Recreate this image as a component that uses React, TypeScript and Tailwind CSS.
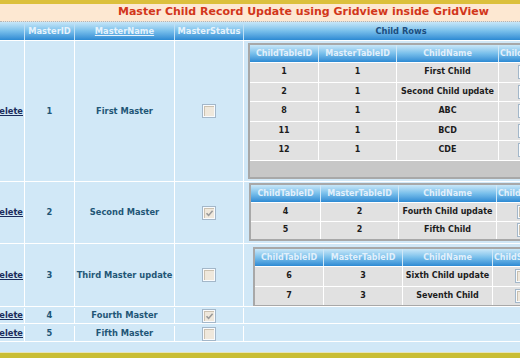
import React from "react";

type Child = { id: number; mid: number; name: string };

const font = "font-['DejaVu_Sans','Liberation_Sans',sans-serif]";
const hdr = "bg-gradient-to-b from-[#c8e7f8] via-[#78bfeb] to-[#2c8ad3]";

const CheckMark = () => (
  <svg width="9" height="9" viewBox="0 0 9 9">
    <path d="M1.5 4.2 L3.6 6.4 L7.6 1.8" fill="none" stroke="#9a9a9a" strokeWidth="1.6" />
  </svg>
);

const CheckBox = ({ checked }: { checked?: boolean }) => (
  <div className="w-[14px] h-[14px] border border-[#a3b7c9] bg-[#f9fbfd] p-[1px] shrink-0">
    <div className="w-full h-full bg-[#efe8dc] border-t border-l border-[#cbc1b0] flex items-center justify-center">
      {checked && <CheckMark />}
    </div>
  </div>
);

type TableProps = {
  rows: Child[];
  box: string;
  widths: [string, string, string];
  rowH: string;
  boxPad: string;
  footer?: boolean;
};

function ChildTable({ rows, box, widths, rowH, boxPad, footer }: TableProps) {
  return (
    <div className={`${box} border-2 border-[#a8a8a8] bg-[#e1e1e1] w-[320px] text-[8px] font-bold`}>
      <div className={`flex h-[17px] ${hdr} text-[#e2f0fb]`}>
        <div className={`${widths[0]} border-r border-[#cfe8f8] flex items-center justify-center`}>ChildTableID</div>
        <div className={`${widths[1]} border-r border-[#cfe8f8] flex items-center justify-center`}>MasterTableID</div>
        <div className={`${widths[2]} border-r border-[#cfe8f8] flex items-center justify-center`}>ChildName</div>
        <div className="w-[60px] flex items-center pl-[1px] whitespace-nowrap">ChildStatus</div>
      </div>
      {rows.map((r) => (
        <div key={r.id} className={`flex ${rowH} border-t border-white text-[#1c1c1c]`}>
          <div className={`${widths[0]} border-r border-white flex items-center justify-center`}>{r.id}</div>
          <div className={`${widths[1]} border-r border-white flex items-center justify-center`}>{r.mid}</div>
          <div className={`${widths[2]} border-r border-white flex items-center justify-center whitespace-nowrap`}>{r.name}</div>
          <div className={`w-[60px] flex items-center ${boxPad}`}>
            <CheckBox />
          </div>
        </div>
      ))}
      {footer && <div className="h-[17px] bg-[#c7c7c7] border-t border-white" />}
    </div>
  );
}

type MasterRow = {
  id: number;
  name: string;
  checked?: boolean;
  h: string;
  child?: React.ReactNode;
};

export default function App() {
  const masters: MasterRow[] = [
    {
      id: 1,
      name: "First Master",
      h: "h-[141px]",
      child: (
        <ChildTable
          box="ml-[4px] mt-[2px]"
          widths={["w-[69px]", "w-[78px]", "w-[102px]"]}
          rowH="h-[19.5px]"
          boxPad="pl-[19px]"
          footer
          rows={[
            { id: 1, mid: 1, name: "First Child" },
            { id: 2, mid: 1, name: "Second Child update" },
            { id: 8, mid: 1, name: "ABC" },
            { id: 11, mid: 1, name: "BCD" },
            { id: 12, mid: 1, name: "CDE" },
          ]}
        />
      ),
    },
    {
      id: 2,
      name: "Second Master",
      checked: true,
      h: "h-[62px]",
      child: (
        <ChildTable
          box="ml-[5px] mt-[1px]"
          widths={["w-[70px]", "w-[78px]", "w-[98px]"]}
          rowH="h-[18.5px]"
          boxPad="pl-[20px]"
          rows={[
            { id: 4, mid: 2, name: "Fourth Child update" },
            { id: 5, mid: 2, name: "Fifth Child" },
          ]}
        />
      ),
    },
    {
      id: 3,
      name: "Third Master update",
      h: "h-[63px]",
      child: (
        <ChildTable
          box="ml-[9px] mt-[3px]"
          widths={["w-[69px]", "w-[79px]", "w-[90px]"]}
          rowH="h-[19.5px]"
          boxPad="pl-[22px]"
          rows={[
            { id: 6, mid: 3, name: "Sixth Child update" },
            { id: 7, mid: 3, name: "Seventh Child" },
          ]}
        />
      ),
    },
    { id: 4, name: "Fourth Master", checked: true, h: "h-[17px] pt-[1px]" },
    { id: 5, name: "Fifth Master", h: "h-[18px] pt-[2px]" },
  ];

  return (
    <div className={`w-[520px] h-[358px] overflow-hidden bg-[#d1e8f7] ${font}`}>
      <div className="w-[558px]">
        {/* top bar + title */}
        <div className="h-[4px] bg-[#dcc03c]" />
        <div className="h-[17px] bg-[#fde8d2] flex items-center pl-[118px]">
          <span className="text-[11px] font-bold text-[#d2361a] whitespace-nowrap">
            Master Child Record Update using Gridview inside GridView
          </span>
        </div>
        <div className="h-[1px] border-t border-dotted border-[#b4b4b4] bg-[#e8e0d8]" />

        {/* header */}
        <div className={`flex h-[19px] ${hdr} border-b border-white text-[8.3px] font-bold text-[#e6f3fc]`}>
          <div className="w-[25px] border-r border-[#bfe0f5]" />
          <div className="w-[50px] border-r border-[#bfe0f5] flex items-center justify-center">MasterID</div>
          <div className="w-[100px] border-r border-[#bfe0f5] flex items-center justify-center">
            <span className="underline">MasterName</span>
          </div>
          <div className="w-[69px] border-r border-[#bfe0f5] flex items-center justify-center">MasterStatus</div>
          <div className="w-[314px] flex items-center justify-center text-[#1b4d7e]">Child Rows</div>
        </div>

        {/* rows */}
        {masters.map((m) => (
          <div key={m.id} className={`flex ${m.h} border-b border-white text-[8.3px] font-bold`}>
            <div className="w-[25px] border-r border-white overflow-hidden flex items-center justify-end pr-[1px]">
              <span className="underline text-[#1b2c5c] whitespace-nowrap">Delete</span>
            </div>
            <div className="w-[50px] border-r border-white flex items-center justify-center text-[#1f5676]">
              {m.id}
            </div>
            <div className="w-[100px] border-r border-white flex items-center justify-center text-[#1f5676] whitespace-nowrap">
              {m.name}
            </div>
            <div className="w-[69px] border-r border-white flex items-center justify-center">
              <CheckBox checked={m.checked} />
            </div>
            <div className="w-[314px] overflow-hidden">{m.child}</div>
          </div>
        ))}

        <div className="h-[10px]" />
        <div className="h-[1px] bg-[#e6e4b8]" />
        <div className="h-[8px] bg-[#c9bd34]" />
      </div>
    </div>
  );
}
